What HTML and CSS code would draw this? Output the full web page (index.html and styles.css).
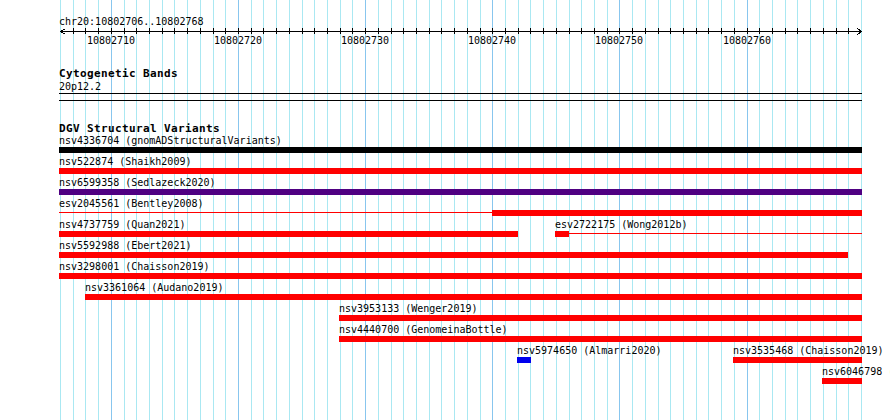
FILE: index.html
```html
<!DOCTYPE html>
<html lang="en">
<head>
<meta charset="UTF-8">
<meta name="viewport" content="width=device-width, initial-scale=1.0">
<title>chr20:10802706-10802768</title>
<link rel="stylesheet" href="styles.css">
</head>
<body>
<svg id="guides" class="guides" width="890" height="420"></svg>

<div class="browser">
  <div class="position">chr20:10802706..10802768</div>
  <svg id="ruler" class="ruler" width="803" height="20"></svg>

  <div class="track-title">Cytogenetic Bands</div>
  <div class="band-name">20p12.2</div>
  <div class="band"></div>

  <div class="track-title dgv">DGV Structural Variants</div>
  <div id="dgv-rows" class="rows"></div>
</div>

<script>
  const START = 10802706;
  const END = 10802768;
  const BASES = END - START + 1;
  const LEFT = 60;
  const SPAN = 801;
  const SVG = 'http://www.w3.org/2000/svg';

  function baseX(k) {
    return Math.round(LEFT + k * SPAN / BASES);
  }

  function svgEl(name, attrs) {
    const el = document.createElementNS(SVG, name);
    for (const key in attrs) el.setAttribute(key, attrs[key]);
    return el;
  }

  // guide lines, one per base, darker every 10 bp
  const guides = document.getElementById('guides');
  for (let k = 0; k <= BASES; k++) {
    const x = baseX(k) + 0.5;
    const line = svgEl('line', { x1: x, y1: 0, x2: x, y2: 420 });
    if ((START + k) % 10 === 0) line.setAttribute('class', 'major');
    guides.appendChild(line);
  }

  // base position ruler (origin at x=59, y=28)
  const ruler = document.getElementById('ruler');
  ruler.appendChild(svgEl('line', { x1: 1, y1: 3.5, x2: 803, y2: 3.5 }));
  ruler.appendChild(svgEl('polyline', { points: '6.5,0.5 1.5,3.5 6.5,6.5' }));
  ruler.appendChild(svgEl('polyline', { points: '798.5,0.5 802.5,3.5 798.5,6.5' }));
  for (let k = 1; k < BASES; k++) {
    const x = baseX(k) - 59 + 0.5;
    ruler.appendChild(svgEl('line', { x1: x, y1: 0, x2: x, y2: 6 }));
    if ((START + k) % 10 === 0) {
      const label = svgEl('text', { x: baseX(k) - 59, y: 16, 'text-anchor': 'middle' });
      label.textContent = START + k;
      ruler.appendChild(label);
    }
  }

  // DGV features, pixel extents on screen
  const rows = [
    [{ name: 'nsv4336704 (gnomADStructuralVariants)', type: 'complex', parts: [[59, 862]] }],
    [{ name: 'nsv522874 (Shaikh2009)', type: 'loss', parts: [[59, 862]] }],
    [{ name: 'nsv6599358 (Sedlazeck2020)', type: 'both', parts: [[59, 862]] }],
    [{ name: 'esv2045561 (Bentley2008)', type: 'loss', parts: [[59, 492, 'thin'], [492, 862]] }],
    [
      { name: 'nsv4737759 (Quan2021)', type: 'loss', parts: [[59, 518]] },
      { name: 'esv2722175 (Wong2012b)', type: 'loss', parts: [[555, 569], [569, 862, 'thin']] }
    ],
    [{ name: 'nsv5592988 (Ebert2021)', type: 'loss', parts: [[59, 848]] }],
    [{ name: 'nsv3298001 (Chaisson2019)', type: 'loss', parts: [[59, 862]] }],
    [{ name: 'nsv3361064 (Audano2019)', type: 'loss', parts: [[85, 862]] }],
    [{ name: 'nsv3953133 (Wenger2019)', type: 'loss', parts: [[339, 862]] }],
    [{ name: 'nsv4440700 (GenomeinaBottle)', type: 'loss', parts: [[339, 862]] }],
    [
      { name: 'nsv5974650 (Almarri2020)', type: 'gain', parts: [[517, 531]] },
      { name: 'nsv3535468 (Chaisson2019)', type: 'loss', parts: [[733, 862]] }
    ],
    [{ name: 'nsv6046798 (Ebert2021)', type: 'loss', parts: [[822, 862]] }]
  ];

  const rowList = document.getElementById('dgv-rows');
  rows.forEach(function(items) {
    const row = document.createElement('div');
    row.className = 'row';
    let prev = 59;
    items.forEach(function(item) {
      const start = item.parts[0][0];
      const end = item.parts[item.parts.length - 1][1];
      const feature = document.createElement('div');
      feature.className = 'feature';
      feature.style.marginLeft = (start - prev) + 'px';
      feature.style.width = (end - start) + 'px';
      const bar = item.parts.map(function(p) {
        return `<div class="${p[2] || 'thick'} ${item.type}" style="width:${p[1] - p[0]}px"></div>`;
      }).join('');
      feature.innerHTML = `
        <div class="label">${item.name}</div>
        <div class="bar">${bar}</div>
      `;
      row.appendChild(feature);
      prev = end;
    });
    rowList.appendChild(row);
  });
</script>

</body>
</html>
```

FILE: styles.css
```css
body {
  margin: 0;
  width: 890px;
  height: 420px;
  overflow: hidden;
  position: relative;
  background: #fff;
  color: #000;
  font-family: "DejaVu Sans Mono", monospace;
  font-size: 10px;
}
.guides {
  position: absolute;
  left: 0;
  top: 0;
}
.guides line {
  stroke: #aae8f2;
  stroke-width: 1;
  shape-rendering: crispEdges;
}
.guides line.major {
  stroke: #88c6ee;
}
.browser {
  position: relative;
  width: 803px;
  padding-left: 59px;
}
.position {
  padding-top: 15px;
  line-height: 13px;
  white-space: nowrap;
}
.ruler {
  display: block;
  overflow: visible;
}
.ruler line, .ruler polyline {
  stroke: #000;
  stroke-width: 1;
  fill: none;
  shape-rendering: crispEdges;
}
.ruler text {
  font-family: "DejaVu Sans Mono", monospace;
  font-size: 10px;
  fill: #000;
}
.track-title {
  margin-top: 19px;
  font-size: 11px;
  font-weight: bold;
  letter-spacing: 0.38px;
  line-height: 13px;
  white-space: nowrap;
}
.track-title.dgv {
  margin-top: 21px;
}
.band-name {
  line-height: 13px;
}
.band {
  height: 6px;
  border-top: 1px solid #000;
  border-bottom: 1px solid #000;
}
.rows {
  margin-top: -1px;
}
.row {
  display: flex;
  height: 21px;
}
.feature {
  flex: none;
}
.label {
  line-height: 13px;
  white-space: nowrap;
}
.bar {
  display: flex;
  height: 6px;
}
.thick {
  height: 6px;
}
.thin {
  height: 1px;
  margin-top: 2px;
}
.loss {
  background-color: #f00;
}
.gain {
  background-color: #0000ee;
}
.both {
  background-color: #4f0082;
}
.complex {
  background-color: #000;
}
```
